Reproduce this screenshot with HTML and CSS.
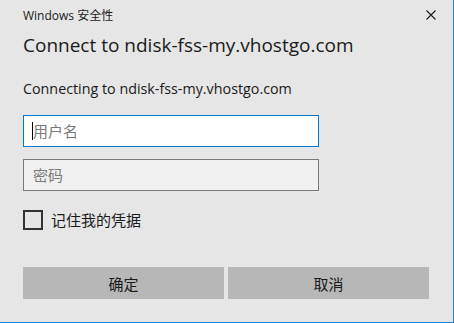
FILE: index.html
```html
<!DOCTYPE html>
<html lang="zh-CN">
  <head>
    <meta charset="UTF-8" />
    <meta name="viewport" content="width=device-width, initial-scale=1.0" />
    <title>Windows 安全性</title>
    <link rel="stylesheet" href="styles.css">
  </head>
  <body>
    <main class="dialog">
      <header class="titlebar">
        <span class="caption">Windows 安全性</span>
        <button class="close" aria-label="关闭">
          <svg width="10" height="10" viewBox="0 0 10 10">
            <path d="M0.5 0.5 L9.5 9.5 M9.5 0.5 L0.5 9.5" stroke="#1a1a1a" stroke-width="1.1" fill="none" />
          </svg>
        </button>
      </header>
      <h1 class="heading">Connect to ndisk-fss-my.vhostgo.com</h1>
      <p class="message">Connecting to ndisk-fss-my.vhostgo.com</p>
      <section class="fields">
        <div class="field-wrap">
          <input class="field focused" type="text" placeholder="用户名" />
          <span class="caret"></span>
        </div>
        <input class="field" type="password" placeholder="密码" />
      </section>
      <label class="remember">
        <span class="check"></span>
        <span>记住我的凭据</span>
      </label>
      <section class="controls">
        <button class="btn">确定</button>
        <button class="btn">取消</button>
      </section>
    </main>
  </body>
</html>
```

FILE: styles.css
```css
* {
  padding: 0;
  margin: 0;
  box-sizing: border-box;
  font-family: "Open Sans", "Noto Sans CJK SC", sans-serif;
}

body {
  background-color: #e6e6e6;
  width: 454px;
  height: 323px;
  overflow: hidden;
}

.dialog {
  height: 323px;
  border-right: 1px solid #1883d7;
  border-bottom: 1px solid #1883d7;
  padding: 0 24px 0 23px;
  color: #1a1a1a;
}

.titlebar {
  display: flex;
  justify-content: space-between;
  align-items: center;
  height: 28px;
  padding-top: 1px;
}

.caption {
  font-size: 12px;
  color: #1a1a1a;
}

.close {
  border: none;
  background: none;
  width: 10px;
  height: 10px;
  margin-right: -7px;
  display: flex;
}

.heading {
  font-size: 19px;
  font-weight: normal;
  color: #1a1a1a;
  margin-top: 4px;
  line-height: 26px;
}

.message {
  font-size: 14.3px;
  margin-top: 22px;
  line-height: 18px;
}

.fields {
  display: flex;
  flex-direction: column;
  gap: 12px;
  margin-top: 17px;
  width: 296px;
}

.field-wrap {
  position: relative;
  display: flex;
  flex-direction: column;
}

.field {
  height: 32px;
  border: 1px solid #7a7a7a;
  background-color: #f0f0f0;
  padding: 0 8px 0 9px;
  font-size: 15px;
  outline: none;
}

.field::placeholder {
  color: #7a7a7a;
}

.field.focused {
  border-color: #0078d7;
  background-color: #ffffff;
}

.caret {
  position: absolute;
  left: 9px;
  top: 7px;
  width: 1px;
  height: 18px;
  background-color: #000000;
}

.remember {
  display: flex;
  align-items: center;
  gap: 8px;
  margin-top: 18px;
  font-size: 15px;
}

.check {
  width: 20px;
  height: 20px;
  border: 2px solid #333333;
}

.controls {
  display: flex;
  gap: 4px;
  margin-top: 37px;
}

.btn {
  width: 201px;
  height: 32px;
  border: none;
  background-color: #b7b7b7;
  font-size: 15px;
  color: #1a1a1a;
}
```
